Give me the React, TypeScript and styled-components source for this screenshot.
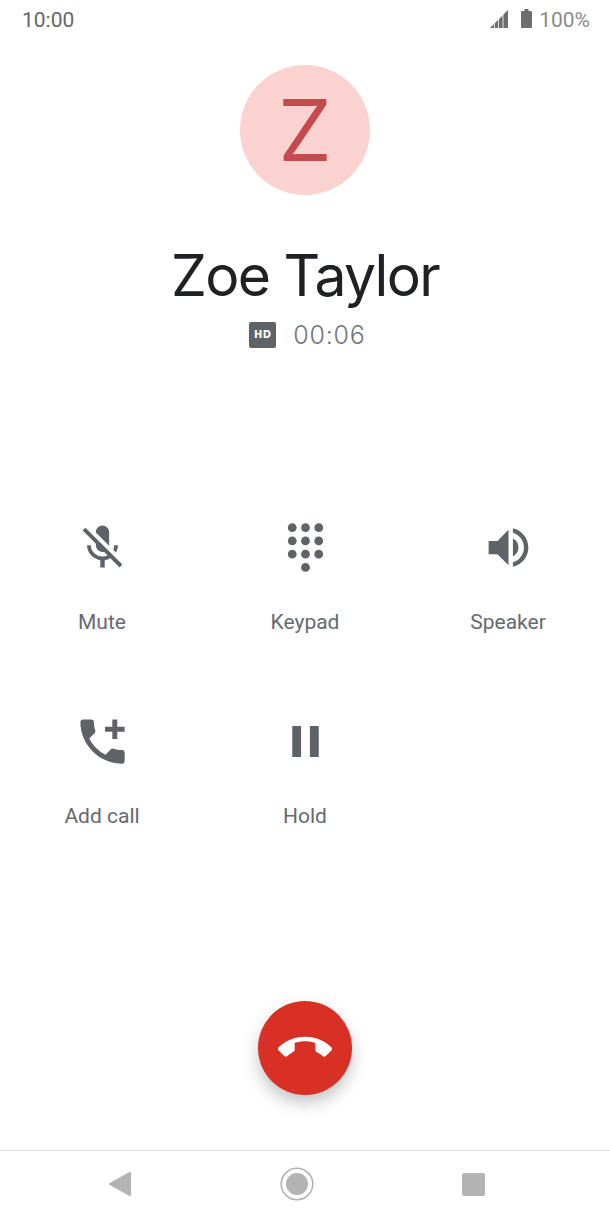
import React from "react";
import styled, { createGlobalStyle } from "styled-components";

const Global = createGlobalStyle`
  html, body { margin: 0; padding: 0; background: #fff; }
  body { font-family: Roboto, "Liberation Sans", sans-serif; }
`;

const Page = styled.div`
  width: 610px;
  height: 1220px;
  display: flex;
  flex-direction: column;
  background: #fff;
  overflow: hidden;
`;

const StatusBar = styled.div`
  height: 40px;
  flex: none;
  display: flex;
  align-items: center;
  padding: 0 20px 0 22px;
  font-size: 21px;
`;

const Clock = styled.span`
  flex: 1;
  color: #666;
`;

const Battery = styled.span`
  color: #8a8a8a;
  margin-left: 7px;
`;

const StatusIcon = styled.svg`
  display: block;
  fill: #6e6e6e;
  margin-top: -3px;
`;

const Header = styled.div`
  flex: none;
  height: 454px;
  display: flex;
  flex-direction: column;
  align-items: center;
  padding-top: 25px;
  box-sizing: border-box;
`;

const Avatar = styled.div`
  width: 130px;
  height: 130px;
  border-radius: 50%;
  background: #fad2cf;
  color: #c5494e;
  display: flex;
  align-items: center;
  justify-content: center;
  font-family: Inter, sans-serif;
  font-weight: 400;
  font-size: 85px;
  line-height: 1;
`;

const Name = styled.div`
  margin-top: 41px;
  font-family: Inter, sans-serif;
  font-weight: 400;
  font-size: 57px;
  letter-spacing: -1.7px;
  line-height: 80px;
  color: #202124;
`;

const CallInfo = styled.div`
  display: flex;
  align-items: center;
  gap: 17px;
  margin-top: 5px;
  padding-left: 5px;
  color: #70757a;
  font-family: Inter, sans-serif;
  font-weight: 300;
  font-size: 25px;
  letter-spacing: 0.8px;
  line-height: 28px;
`;

const HdBadge = styled.span`
  width: 27px;
  height: 26px;
  border-radius: 2px;
  background: #5f6368;
  color: #fff;
  font-family: "DejaVu Sans", sans-serif;
  font-size: 10px;
  font-weight: 700;
  letter-spacing: 0.5px;
  display: flex;
  align-items: center;
  justify-content: center;
`;

const Controls = styled.div`
  flex: none;
  display: grid;
  grid-template-columns: repeat(3, 203px);
  grid-auto-rows: 194px;
  padding-left: 0.5px;
`;

const Control = styled.div`
  display: flex;
  flex-direction: column;
  align-items: center;
  color: #666a6e;
  font-size: 21px;
`;

const IconSlot = styled.div`
  width: 60px;
  height: 60px;
  margin-top: 23px;
  display: flex;
  align-items: center;
  justify-content: center;
`;

const Label = styled.span`
  margin-top: 33px;
  line-height: 24px;
`;

const Icon = styled.svg`
  display: block;
  fill: #5f6368;
`;

const EndArea = styled.div`
  flex: 1;
  display: flex;
  justify-content: center;
  padding-top: 119px;
`;

const EndButton = styled.button`
  width: 94px;
  height: 94px;
  padding: 0;
  border: 0;
  border-radius: 50%;
  background: #d93025;
  display: flex;
  align-items: center;
  justify-content: center;
  box-shadow: 0 8px 16px rgba(60, 64, 67, 0.3);
`;

const NavBar = styled.div`
  flex: none;
  height: 70px;
  box-sizing: border-box;
  border-top: 1.5px solid #dcdcdc;
  display: grid;
  grid-template-columns: repeat(3, 176.5px);
  padding: 0 0 3px 32px;
  align-items: center;
`;

const NavSlot = styled.div`
  display: flex;
  justify-content: center;
`;

const NavIcon = styled.svg`
  display: block;
  fill: #b3b3b3;
`;

const paths = {
  mic: "M19 11h-1.7c0 .74-.16 1.43-.43 2.05l1.23 1.23c.56-.98.9-2.09.9-3.28zm-4.02.17c0-.06.02-.11.02-.17V5c0-1.66-1.34-3-3-3S9 3.34 9 5v.18l5.98 5.99zM4.27 3L3 4.27l6.01 6.01V11c0 1.66 1.33 3 2.99 3 .22 0 .44-.03.65-.08l1.66 1.66c-.71.33-1.5.52-2.31.52-2.76 0-5.3-2.24-5.3-5.1H5c0 3.41 2.72 6.23 6 6.72V21h2v-3.28c.91-.13 1.77-.45 2.54-.9L19.73 21 21 19.73 4.27 3z",
  pad: "M12 19c-1.1 0-2 .9-2 2s.9 2 2 2 2-.9 2-2-.9-2-2-2zM6 1c-1.1 0-2 .9-2 2s.9 2 2 2 2-.9 2-2-.9-2-2-2zm0 6c-1.1 0-2 .9-2 2s.9 2 2 2 2-.9 2-2-.9-2-2-2zm0 6c-1.1 0-2 .9-2 2s.9 2 2 2 2-.9 2-2-.9-2-2-2zm12-8c1.1 0 2-.9 2-2s-.9-2-2-2-2 .9-2 2 .9 2 2 2zm-6 8c-1.1 0-2 .9-2 2s.9 2 2 2 2-.9 2-2-.9-2-2-2zm6 0c-1.1 0-2 .9-2 2s.9 2 2 2 2-.9 2-2-.9-2-2-2zm0-6c-1.1 0-2 .9-2 2s.9 2 2 2 2-.9 2-2-.9-2-2-2zm-6 0c-1.1 0-2 .9-2 2s.9 2 2 2 2-.9 2-2-.9-2-2-2zm0-6c-1.1 0-2 .9-2 2s.9 2 2 2 2-.9 2-2-.9-2-2-2z",
  speaker: "M3 9v6h4l5 5V4L7 9H3zm13.5 3c0-1.77-1.02-3.29-2.5-4.03v8.05c1.48-.73 2.5-2.25 2.5-4.02zM14 3.23v2.06c2.89.86 5 3.54 5 6.71s-2.11 5.85-5 6.71v2.06c4.01-.91 7-4.49 7-8.77s-2.99-7.86-7-8.77z",
  add: "M20 15.5c-1.25 0-2.45-.2-3.57-.57-.35-.11-.74-.03-1.02.24l-2.2 2.2c-2.83-1.44-5.15-3.75-6.59-6.59l2.2-2.21c.28-.26.36-.65.25-1C8.7 6.45 8.5 5.25 8.5 4c0-.55-.45-1-1-1H4c-.55 0-1 .45-1 1 0 9.39 7.61 17 17 17 .55 0 1-.45 1-1v-3.5c0-.55-.45-1-1-1zM21 6h-3V3h-2v3h-3v2h3v3h2V8h3z",
  pause: "M6 19h4V5H6v14zm8-14v14h4V5h-4z",
  end: "M12 9c-1.6 0-3.15.25-4.6.72v3.1c0 .39-.23.74-.56.9-.98.49-1.87 1.12-2.66 1.85-.18.18-.43.28-.7.28-.28 0-.53-.11-.71-.29L.29 13.08c-.18-.17-.29-.42-.29-.7 0-.28.11-.53.29-.71C3.34 8.78 7.46 7 12 7s8.66 1.78 11.71 4.67c.18.18.29.43.29.71 0 .28-.11.53-.29.71l-2.48 2.48c-.18.18-.43.29-.71.29-.27 0-.52-.11-.7-.28-.79-.74-1.69-1.36-2.67-1.85-.33-.16-.56-.5-.56-.9v-3.1C15.15 9.25 13.6 9 12 9z",
};

const controls = [
  { label: "Mute", d: paths.mic, size: 53 },
  { label: "Keypad", d: paths.pad, size: 53 },
  { label: "Speaker", d: paths.speaker, size: 53 },
  { label: "Add call", d: paths.add, size: 59 },
  { label: "Hold", d: paths.pause, size: 53 },
];

export default function App() {
  return (
    <Page>
      <Global />
      <StatusBar>
        <Clock>10:00</Clock>
        <StatusIcon width="18" height="18" viewBox="0 0 18 18">
          <path d="M0 18L4 14V18ZM4.8 13.2L8.2 9.8V18H4.8ZM9 9L12.6 5.4V18H9ZM13.4 4.6L18 0V18H13.4Z" />
        </StatusIcon>
        <StatusIcon width="11" height="19" viewBox="0 0 11 19" style={{ marginLeft: 13 }}>
          <path d="M3.5 0H7.5V2H10C10.5 2 11 2.5 11 3V18C11 18.5 10.5 19 10 19H1C.5 19 0 18.5 0 18V3C0 2.5.5 2 1 2H3.5Z" />
        </StatusIcon>
        <Battery>100%</Battery>
      </StatusBar>
      <Header>
        <Avatar>Z</Avatar>
        <Name>Zoe Taylor</Name>
        <CallInfo>
          <HdBadge>HD</HdBadge>
          <span>00:06</span>
        </CallInfo>
      </Header>
      <Controls>
        {controls.map((c) => (
          <Control key={c.label}>
            <IconSlot>
              <Icon width={c.size} height={c.size} viewBox="0 0 24 24">
                <path d={c.d} />
              </Icon>
            </IconSlot>
            <Label>{c.label}</Label>
          </Control>
        ))}
      </Controls>
      <EndArea>
        <EndButton aria-label="End call">
          <svg width="54" height="54" viewBox="0 0 24 24" fill="#fff">
            <path d={paths.end} />
          </svg>
        </EndButton>
      </EndArea>
      <NavBar>
        <NavSlot>
          <NavIcon width="22" height="24" viewBox="0 0 22 24">
            <path d="M22 1.2V22.8C22 23.8 21 24.3 20 23.7L.7 13C-.2 12.5-.2 11.5.7 11L20 .3C21-.3 22 .2 22 1.2Z" />
          </NavIcon>
        </NavSlot>
        <NavSlot>
          <NavIcon width="34" height="34" viewBox="0 0 34 34">
            <circle cx="17" cy="17" r="15.8" fill="none" stroke="#b3b3b3" strokeWidth="1.6" />
            <circle cx="17" cy="17" r="11" />
          </NavIcon>
        </NavSlot>
        <NavSlot>
          <NavIcon width="23" height="23" viewBox="0 0 23 23">
            <rect width="23" height="23" rx="2" />
          </NavIcon>
        </NavSlot>
      </NavBar>
    </Page>
  );
}
